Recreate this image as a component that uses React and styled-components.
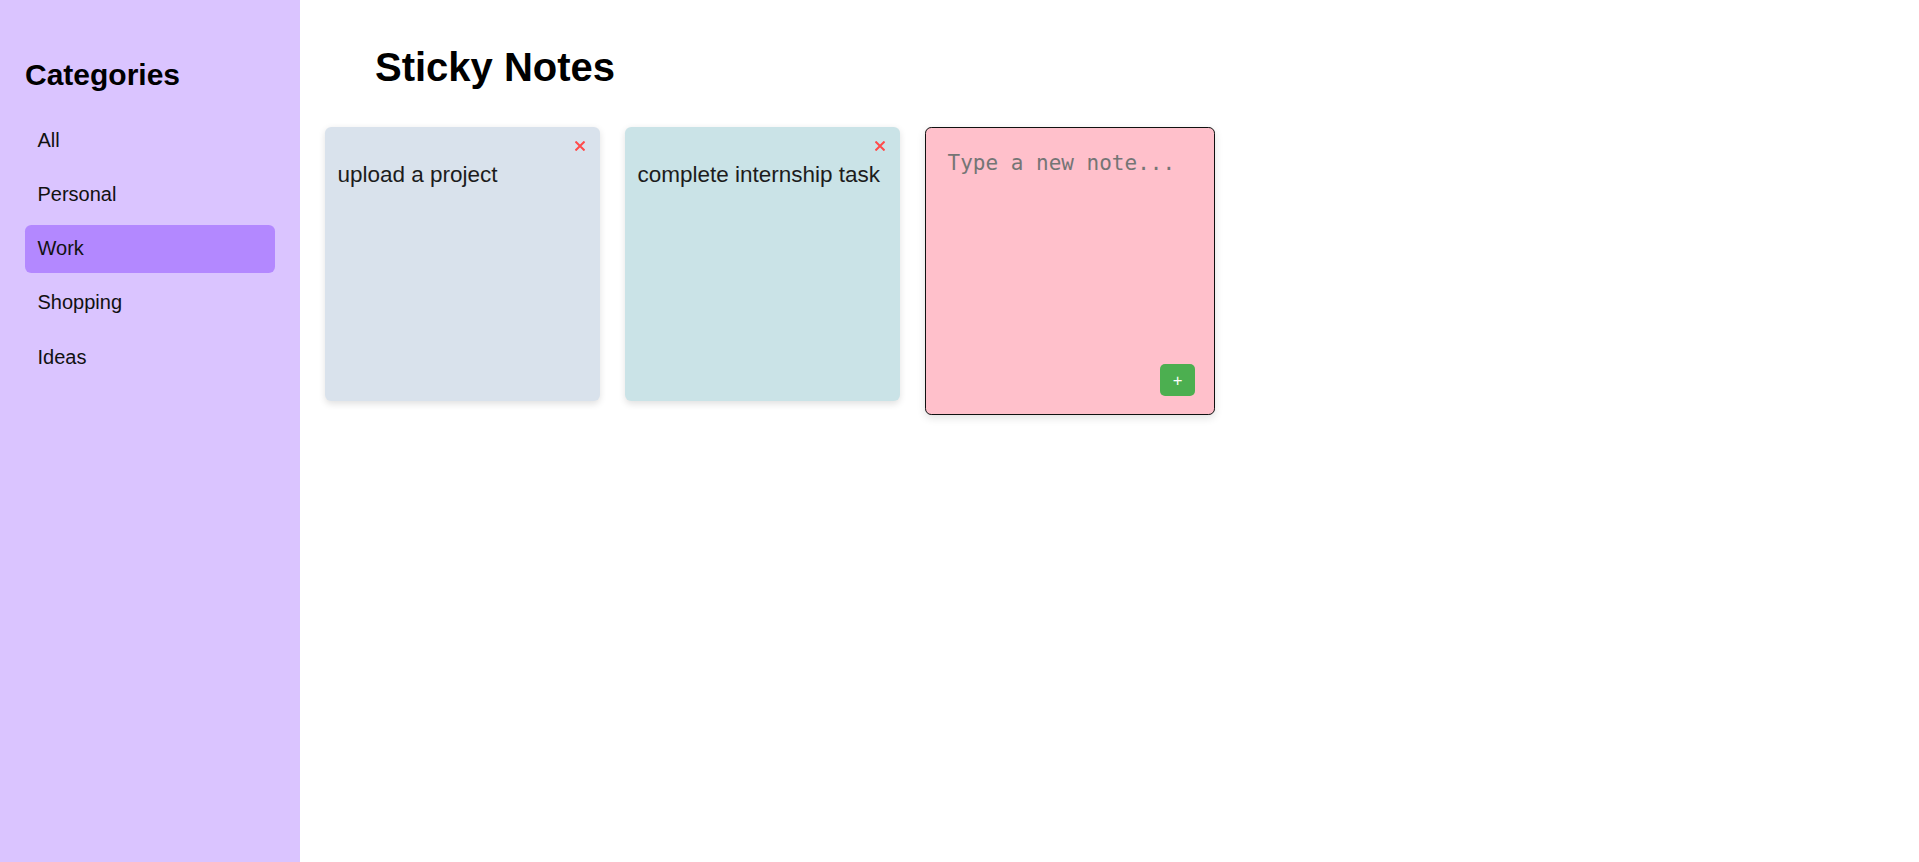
import React, { useState } from "react";
import styled, { createGlobalStyle } from "styled-components";

const GlobalStyle = createGlobalStyle`
  html, body {
    margin: 0;
    padding: 0;
    background: #ffffff;
    font-family: "Liberation Sans", Arial, sans-serif;
    overflow: hidden;
  }
`;

const Viewport = styled.div`
  height: 100vh;
  overflow-y: scroll;
  &::-webkit-scrollbar {
    width: 17px;
    background: #f1f1f1;
  }
  &::-webkit-scrollbar-track {
    background: #f1f1f1;
  }
  &::-webkit-scrollbar-thumb {
    background: #c1c1c1;
    border-left: 2px solid #f1f1f1;
    border-right: 2px solid #f1f1f1;
  }
  &::-webkit-scrollbar-button:single-button {
    display: block;
    height: 17px;
    background-color: #f1f1f1;
    background-repeat: no-repeat;
  }
  &::-webkit-scrollbar-button:single-button:vertical:decrement {
    background-image: linear-gradient(135deg, transparent 0 50%, #a3a3a3 50%),
      linear-gradient(225deg, transparent 0 50%, #a3a3a3 50%);
    background-size: 4px 4px, 4px 4px;
    background-position: 4.5px 6.5px, 8.5px 6.5px;
  }
  &::-webkit-scrollbar-button:single-button:vertical:increment {
    background-image: linear-gradient(45deg, transparent 0 50%, #505050 50%),
      linear-gradient(315deg, transparent 0 50%, #505050 50%);
    background-size: 4px 4px, 4px 4px;
    background-position: 4.5px 6.5px, 8.5px 6.5px;
  }
`;

const Layout = styled.div`
  display: flex;
  align-items: flex-start;
`;

const Sidebar = styled.aside`
  box-sizing: content-box;
  width: 250px;
  height: 100vh;
  padding: 25px;
  background: #dac4ff;
  flex-shrink: 0;
`;

const SidebarTitle = styled.h2`
  margin: 33px 0 24px 0;
  font-size: 30px;
  font-weight: bold;
  line-height: normal;
  color: #000;
`;

const CategoryList = styled.ul`
  list-style: none;
  margin: 0;
  padding: 0;
  display: flex;
  flex-direction: column;
  gap: 6.25px;
`;

const CategoryItem = styled.li`
  padding: 12.5px;
  font-size: 20px;
  line-height: 23px;
  color: #111;
  border-radius: 6.25px;
  cursor: pointer;
  background: ${(p) => (p.$active ? "#b388ff" : "transparent")};
`;

const Main = styled.main`
  flex: 1;
  padding: 25px;
`;

const PageTitle = styled.h1`
  margin: 20px 0 0 50px;
  font-size: 40px;
  font-weight: bold;
  line-height: normal;
  color: #000;
`;

const NotesRow = styled.div`
  display: flex;
  align-items: flex-start;
  gap: 25px;
  margin-top: 37.3px;
`;

const Note = styled.div`
  box-sizing: border-box;
  width: 275px;
  height: 274px;
  padding: 12.5px;
  border-radius: 6.25px;
  background: ${(p) => p.$color};
  box-shadow: 0 2.5px 7px rgba(0, 0, 0, 0.12);
  display: flex;
  flex-direction: column;
`;

const DeleteButton = styled.button`
  align-self: flex-end;
  width: 10px;
  height: 10px;
  margin: 1px 3px 11.5px 0;
  padding: 0;
  border: none;
  background: none;
  cursor: pointer;
  display: flex;
  svg {
    display: block;
  }
`;

const NoteText = styled.p`
  margin: 0;
  font-size: 22.5px;
  line-height: normal;
  color: #1c1c1c;
`;

const NewNoteCard = styled.div`
  box-sizing: border-box;
  width: 290px;
  height: 288px;
  padding: 12.5px;
  border: 1.25px solid #111;
  border-radius: 6.25px;
  background: #ffc0cb;
  box-shadow: 0 3px 8px rgba(0, 0, 0, 0.12);
  display: flex;
  flex-direction: column;
`;

const NoteInput = styled.textarea`
  flex: 1;
  min-height: 0;
  padding: 10px 9px 9px 9px;
  border: none;
  outline: none;
  resize: none;
  background: transparent;
  font-family: "DejaVu Sans Mono", "Liberation Mono", monospace;
  font-size: 21px;
  line-height: normal;
  color: #222;
  &::placeholder {
    color: #757575;
  }
`;

const AddButton = styled.button`
  align-self: flex-end;
  margin: 0 6.5px 6px 0;
  padding: 6.25px 12.5px;
  border: none;
  border-radius: 5px;
  background: #4caf50;
  color: #fff;
  font-family: "Liberation Sans", Arial, sans-serif;
  font-size: 16.7px;
  line-height: 19px;
  cursor: pointer;
`;

const CloseIcon = () => (
  <svg width="10" height="10" viewBox="0 0 10 10">
    <path d="M1.2 1.2 L8.8 8.8 M8.8 1.2 L1.2 8.8" stroke="#ff4b4b" strokeWidth="2" strokeLinecap="square" />
  </svg>
);

const categories = ["All", "Personal", "Work", "Shopping", "Ideas"];

const initialNotes = [
  { id: 1, text: "upload a project", color: "#d9e2ec" },
  { id: 2, text: "complete internship task", color: "#cae3e7" },
];

export default function App() {
  const [active, setActive] = useState("Work");
  const [notes, setNotes] = useState(initialNotes);
  const [draft, setDraft] = useState("");

  const addNote = () => {
    if (!draft.trim()) return;
    setNotes([...notes, { id: Date.now(), text: draft, color: "#d9e2ec" }]);
    setDraft("");
  };

  return (
    <>
      <GlobalStyle />
      <Viewport>
        <Layout>
          <Sidebar>
            <SidebarTitle>Categories</SidebarTitle>
            <CategoryList>
              {categories.map((c) => (
                <CategoryItem key={c} $active={c === active} onClick={() => setActive(c)}>
                  {c}
                </CategoryItem>
              ))}
            </CategoryList>
          </Sidebar>
          <Main>
            <PageTitle>Sticky Notes</PageTitle>
            <NotesRow>
              {notes.map((n) => (
                <Note key={n.id} $color={n.color}>
                  <DeleteButton
                    aria-label="Delete note"
                    onClick={() => setNotes(notes.filter((x) => x.id !== n.id))}
                  >
                    <CloseIcon />
                  </DeleteButton>
                  <NoteText>{n.text}</NoteText>
                </Note>
              ))}
              <NewNoteCard>
                <NoteInput
                  placeholder="Type a new note..."
                  value={draft}
                  onChange={(e) => setDraft(e.target.value)}
                />
                <AddButton onClick={addNote}>+</AddButton>
              </NewNoteCard>
            </NotesRow>
          </Main>
        </Layout>
      </Viewport>
    </>
  );
}
